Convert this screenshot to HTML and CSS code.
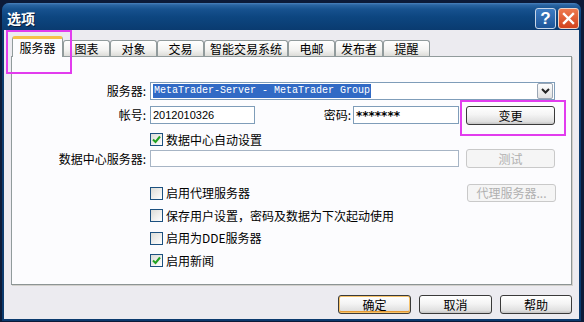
FILE: index.html
```html
<!DOCTYPE html>
<html>
<head>
  <meta charset="UTF-8">
  <link rel="stylesheet" href="styles.css">
</head>
<body>
  <div class="window">
    <div class="titlebar">
      <span class="title">选项</span>
      <span class="caption-btn help">?</span>
      <span class="caption-btn close">
        <svg width="13" height="13" viewBox="0 0 13 13"><path d="M2 2 L11 11 M11 2 L2 11" stroke="#fff" stroke-width="2.4" stroke-linecap="square"/></svg>
      </span>
    </div>
    <div class="client">
      <div class="tabs">
        <div class="tab active">服务器</div>
        <div class="tab">图表</div>
        <div class="tab">对象</div>
        <div class="tab">交易</div>
        <div class="tab">智能交易系统</div>
        <div class="tab">电邮</div>
        <div class="tab">发布者</div>
        <div class="tab">提醒</div>
      </div>
      <div class="panel">
        <div class="row row-server">
          <label class="field-label">服务器:</label>
          <div class="combo">
            <span class="combo-text">MetaTrader-Server - MetaTrader Group</span>
            <span class="combo-btn">
              <svg width="9" height="6" viewBox="0 0 9 6"><path d="M1 1 L4.5 4.5 L8 1" fill="none" stroke="#222" stroke-width="2"/></svg>
            </span>
          </div>
        </div>
        <div class="row row-account">
          <label class="field-label">帐号:</label>
          <div class="input input-account">2012010326</div>
          <label class="pass-label">密码:</label>
          <div class="input input-pass">*******</div>
          <button class="btn btn-side btn-change">变更</button>
        </div>
        <div class="row row-auto">
          <label class="check">
            <span class="box"><svg width="9" height="9" viewBox="0 0 9 9"><path d="M1 4.5 L3.5 7 L8 1.5" fill="none" stroke="#21a121" stroke-width="2"/></svg></span>
            数据中心自动设置
          </label>
        </div>
        <div class="row row-dc">
          <label class="field-label">数据中心服务器:</label>
          <div class="input input-dc"></div>
          <button class="btn btn-side" disabled>测试</button>
        </div>
        <div class="checks">
          <div class="check-row">
            <label class="check"><span class="box"></span>启用代理服务器</label>
            <button class="btn btn-side btn-proxy" disabled>代理服务器...</button>
          </div>
          <div class="check-row">
            <label class="check"><span class="box"></span>保存用户设置，密码及数据为下次起动使用</label>
          </div>
          <div class="check-row">
            <label class="check"><span class="box"></span>启用为DDE服务器</label>
          </div>
          <div class="check-row">
            <label class="check">
              <span class="box"><svg width="9" height="9" viewBox="0 0 9 9"><path d="M1 4.5 L3.5 7 L8 1.5" fill="none" stroke="#21a121" stroke-width="2"/></svg></span>
              启用新闻
            </label>
          </div>
        </div>
      </div>
      <div class="actions">
        <button class="btn btn-default">确定</button>
        <button class="btn">取消</button>
        <button class="btn btn-help">帮助</button>
      </div>
    </div>
  </div>
</body>
</html>
```

FILE: styles.css
```css
* {
  box-sizing: border-box;
}
html, body {
  margin: 0;
}
body {
  width: 584px;
  height: 322px;
  overflow: hidden;
  padding: 3px 0 0 2px;
  background: #0c1a38;
  font-family: "Noto Sans CJK SC", sans-serif;
  font-size: 12px;
  line-height: 16px;
  color: #000;
}
.window {
  width: 579px;
  height: 318px;
  display: flex;
  flex-direction: column;
  padding: 0 2px 2px;
  background: #0b3a6e;
  border-radius: 7px 7px 0 0;
}
.titlebar {
  height: 27px;
  display: flex;
  align-items: flex-start;
  padding: 5px 2px 0 5px;
  margin: 0 -2px;
  border-radius: 7px 7px 0 0;
  background: linear-gradient(#4a82bd 0, #2a64a2 2px, #17528f 6px, #0d4680 14px, #0a3b70 100%);
}
.title {
  flex: 1;
  color: #fff;
  font-weight: bold;
  font-size: 14px;
  line-height: 20px;
  text-shadow: 1px 1px 0 #0a1c3a;
}
.caption-btn {
  width: 21px;
  height: 21px;
  display: flex;
  align-items: center;
  justify-content: center;
  border: 1px solid #c8d6e8;
  border-radius: 3px;
  color: #fff;
  font-family: "Liberation Sans", sans-serif;
  font-weight: bold;
  font-size: 17px;
}
.help {
  margin-right: 2px;
  background: linear-gradient(#3d7cc4, #1d5598);
}
.close {
  background: linear-gradient(#ee7a50, #d2421d);
  border-color: #f0d2c4;
}
.client {
  flex: 1;
  background: #ecebf0;
  padding: 6px 7px 0 7px;
}
.tabs {
  height: 20px;
  display: flex;
  align-items: flex-end;
  padding-left: 1px;
}
.tab {
  min-width: 47px;
  height: 16px;
  padding: 0 5px;
  border: 1px solid #919b9c;
  border-bottom: none;
  border-radius: 3px 3px 0 0;
  background: linear-gradient(#ffffff, #f3f3f1 60%, #dcdcd8);
  text-align: center;
  line-height: 15px;
}
.tab.active {
  position: relative;
  z-index: 1;
  width: 51px;
  height: 21px;
  margin-bottom: -1px;
  border-top: 3px solid #f5c04a;
  background: #fcfcfe;
  line-height: 17px;
}
.tab.active::after {
  content: "";
  position: absolute;
  top: -9px;
  left: -7px;
  width: 62px;
  height: 40px;
  border: 2px solid #e23cee;
}
.panel {
  height: 229px;
  border: 1px solid #919b9c;
  border-right-color: #8c9494;
  border-bottom-color: #8c9494;
  box-shadow: 1px 1px 0 #d2d0cc;
  background: #fcfcfe;
  padding: 25px 0 0 0;
}
.row {
  display: flex;
  align-items: center;
}
.field-label {
  width: 134px;
  margin-right: 4px;
  text-align: right;
  white-space: nowrap;
}
.row-server {
  height: 18px;
}
.combo {
  width: 405px;
  height: 18px;
  display: flex;
  align-items: center;
  padding: 1px;
  border: 1px solid #7f9db9;
  background: #fff;
}
.combo-text {
  margin-left: 1px;
  padding: 0 1px;
  background: #316ac5;
  color: #fff;
  font-family: "Liberation Mono", monospace;
  font-size: 10px;
  line-height: 14px;
  white-space: pre;
}
.combo-btn {
  margin-left: auto;
  width: 16px;
  height: 16px;
  display: flex;
  align-items: center;
  justify-content: center;
  border: 1px solid #9aa6b4;
  border-radius: 2px;
  background: linear-gradient(#fdfdfd, #e2e2e2);
}
.row-account {
  height: 18px;
  margin-top: 6px;
  align-items: flex-start;
}
.input {
  height: 18px;
  border: 1px solid #7f9db9;
  background: #fff;
  padding-left: 2px;
  font-family: "Liberation Sans", sans-serif;
  font-size: 11px;
  line-height: 16px;
}
.input-account {
  width: 105px;
}
.pass-label {
  width: 96px;
  margin-right: 2px;
  text-align: right;
  line-height: 18px;
}
.row-account .field-label {
  line-height: 18px;
}
.input-pass {
  width: 106px;
  font-family: "DejaVu Sans", sans-serif;
  font-size: 12px;
  font-weight: bold;
  line-height: 18px;
}
.btn {
  position: relative;
  height: 19px;
  padding: 0;
  border: 1px solid #3a3a3a;
  border-radius: 3px;
  background: linear-gradient(#ffffff, #f4f4f4 45%, #e0e0e0 85%, #c4c4c4);
  font-family: "Noto Sans CJK SC", sans-serif;
  font-size: 12px;
  line-height: 16px;
  color: #000;
}
.btn-side {
  width: 89px;
  margin-left: 7px;
}
.btn:disabled {
  border-color: #c9c9c9;
  background: #f5f5f5;
  color: #b0b0b0;
}
.btn-change::after {
  content: "";
  position: absolute;
  top: -7px;
  left: -7px;
  width: 102px;
  height: 32px;
  border: 2px solid #e23cee;
}
.row-auto {
  height: 17px;
  margin-top: 7px;
}
.check {
  display: flex;
  align-items: center;
  gap: 3px;
  margin-left: 138px;
  white-space: nowrap;
}
.box {
  width: 13px;
  height: 13px;
  display: flex;
  align-items: center;
  justify-content: center;
  border: 1px solid #1c5180;
  background: linear-gradient(135deg, #dcdcd7, #ffffff);
}
.row-dc {
  height: 19px;
  margin-top: 1px;
  align-items: flex-end;
}
.row-dc .field-label {
  line-height: 18px;
}
.input-dc {
  width: 309px;
  height: 17px;
  margin-bottom: 1px;
  border-color: #a7b5c5;
}
.checks {
  margin-top: 14px;
}
.check-row {
  height: 22.5px;
  display: flex;
  align-items: center;
}
.btn-proxy {
  margin-left: auto;
  margin-right: 15px;
  height: 18px;
  color: #a8a8a8;
}
.actions {
  display: flex;
  justify-content: flex-end;
  gap: 8px;
  margin-top: 10px;
}
.actions .btn {
  width: 73px;
}
.actions .btn-help {
  width: 72px;
}
.btn-default {
  box-shadow: inset 0 0 0 1px #f6c26a, inset 0 -1px 0 1px #e59a34;
}
```
